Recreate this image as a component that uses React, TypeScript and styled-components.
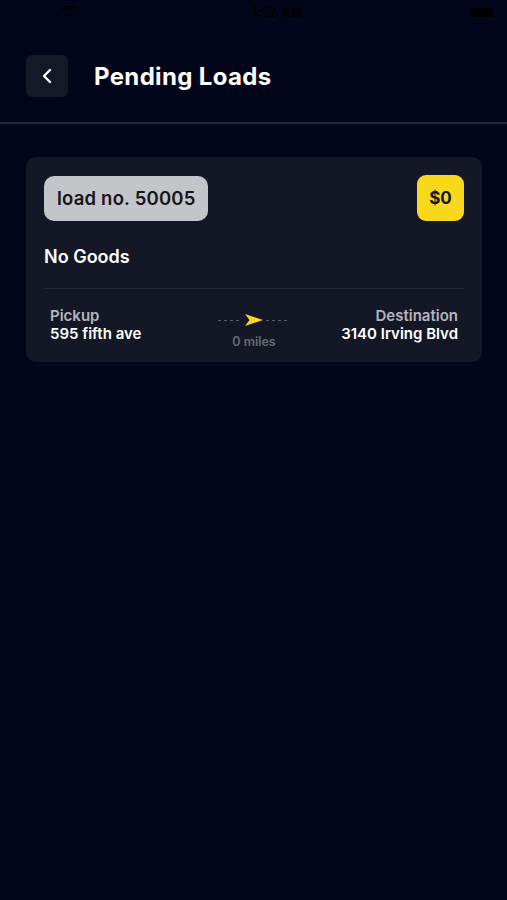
import styled, { createGlobalStyle } from 'styled-components';

const GlobalStyle = createGlobalStyle`
  html, body {
    margin: 0;
    padding: 0;
    background-color: #03061A;
  }
  body {
    font-family: 'Inter', 'Noto Sans', sans-serif;
    -webkit-font-smoothing: antialiased;
  }
`;

function App() {
  return (
    <Page>
      <GlobalStyle />
      <StatusBar>
        <StatusLeft>
          <svg width="16" height="12" viewBox="0 0 16 12">
            <path d="M8 11.5 L5.6 8.6 A3.6 3.6 0 0 1 10.4 8.6 Z" fill="#000" />
            <path d="M2.6 5.4 A7.6 7.6 0 0 1 13.4 5.4" stroke="#000" strokeWidth="2" fill="none" />
            <path d="M0.6 2.8 A10.8 10.8 0 0 1 15.4 2.8" stroke="#000" strokeWidth="2" fill="none" />
          </svg>
        </StatusLeft>
        <StatusTime>1:12 AM</StatusTime>
        <StatusRight>
          <Battery />
        </StatusRight>
      </StatusBar>
      <Header>
        <BackButton>
          <svg width="14" height="16" viewBox="0 0 14 16">
            <path d="M10 2 L4 8 L10 14" stroke="#FFFFFF" strokeWidth="2.4" fill="none" strokeLinecap="round" strokeLinejoin="round" />
          </svg>
        </BackButton>
        <Title>Pending Loads</Title>
      </Header>
      <Content>
        <LoadCard>
          <CardTop>
            <LoadBadge>load no. 50005</LoadBadge>
            <PriceBadge>$0</PriceBadge>
          </CardTop>
          <Goods>No Goods</Goods>
          <CardDivider />
          <RouteRow>
            <Place>
              <PlaceLabel>Pickup</PlaceLabel>
              <PlaceValue>595 fifth ave</PlaceValue>
            </Place>
            <Distance>
              <DashLine>
                <Dashes />
                <svg width="20" height="14" viewBox="0 0 20 14">
                  <path d="M1 1 L19 7 L1 13 L5.5 7 Z" fill="#F7D81B" />
                </svg>
                <Dashes />
              </DashLine>
              <Miles>0 miles</Miles>
            </Distance>
            <Place $right>
              <PlaceLabel>Destination</PlaceLabel>
              <PlaceValue>3140 Irving Blvd</PlaceValue>
            </Place>
          </RouteRow>
        </LoadCard>
      </Content>
    </Page>
  );
}

const Page = styled.div`
  display: flex;
  flex-direction: column;
  min-height: 900px;
  background-color: #03061A;
  color: #FFFFFF;
`;

const StatusBar = styled.div`
  display: grid;
  grid-template-columns: 1fr auto 1fr;
  align-items: center;
  height: 24px;
  padding: 0 14px 0 62px;
`;

const StatusLeft = styled.div`
  display: flex;
  align-items: center;
`;

const StatusTime = styled.div`
  font-size: 13px;
  font-weight: 700;
  color: #000000;
  letter-spacing: 0.5px;
`;

const StatusRight = styled.div`
  display: flex;
  justify-content: flex-end;
`;

const Battery = styled.div`
  width: 22px;
  height: 9px;
  border-radius: 2px;
  background-color: #000000;
`;

const Header = styled.div`
  display: flex;
  align-items: center;
  gap: 26px;
  padding: 31px 26px 25px;
  border-bottom: 2px solid #23263A;
`;

const BackButton = styled.div`
  display: flex;
  align-items: center;
  justify-content: center;
  width: 42px;
  height: 42px;
  border-radius: 6px;
  background-color: #151826;
`;

const Title = styled.div`
  font-size: 24px;
  font-weight: 700;
  color: #FFFFFF;
  letter-spacing: 0.35px;
`;

const Content = styled.div`
  display: flex;
  flex-direction: column;
  padding: 33px 25px 0 26px;
`;

const LoadCard = styled.div`
  display: flex;
  flex-direction: column;
  padding: 18px 18px 13px;
  border-radius: 10px;
  background-color: #141726;
`;

const CardTop = styled.div`
  display: flex;
  justify-content: space-between;
  align-items: center;
`;

const LoadBadge = styled.div`
  display: flex;
  align-items: center;
  height: 45px;
  padding: 0 12px 0 13px;
  border-radius: 10px;
  background-color: #C4C5C8;
  color: #15161C;
  font-size: 18.5px;
  font-weight: 600;
  letter-spacing: 0.2px;
`;

const PriceBadge = styled.div`
  display: flex;
  align-items: center;
  justify-content: center;
  width: 47px;
  height: 46px;
  border-radius: 9px;
  background-color: #F7D81B;
  color: #15161C;
  font-size: 17px;
  font-weight: 700;
`;

const Goods = styled.div`
  margin-top: 25px;
  font-size: 18px;
  line-height: 22px;
  font-weight: 600;
  color: #FFFFFF;
`;

const CardDivider = styled.div`
  height: 1px;
  margin-top: 20px;
  background-color: #252838;
`;

const RouteRow = styled.div`
  display: flex;
  justify-content: space-between;
  align-items: flex-start;
  padding: 18px 6px 0;
`;

const Place = styled.div<{ $right?: boolean }>`
  display: flex;
  flex-direction: column;
  align-items: ${(p) => (p.$right ? 'flex-end' : 'flex-start')};
  width: 150px;
`;

const PlaceLabel = styled.div`
  font-size: 15px;
  line-height: 18px;
  font-weight: 600;
  color: #B5B6BD;
`;

const PlaceValue = styled.div`
  font-size: 15px;
  line-height: 18px;
  font-weight: 600;
  color: #FFFFFF;
`;

const Distance = styled.div`
  display: flex;
  flex-direction: column;
  align-items: center;
  padding-top: 6px;
`;

const DashLine = styled.div`
  display: flex;
  align-items: center;
  gap: 2px;
`;

const Dashes = styled.div`
  width: 24px;
  height: 1px;
  background-image: repeating-linear-gradient(90deg, #5A5C68 0 3px, transparent 3px 6px);
`;

const Miles = styled.div`
  margin-top: 7px;
  font-size: 12.5px;
  font-weight: 600;
  color: #686A76;
`;

export default App;
